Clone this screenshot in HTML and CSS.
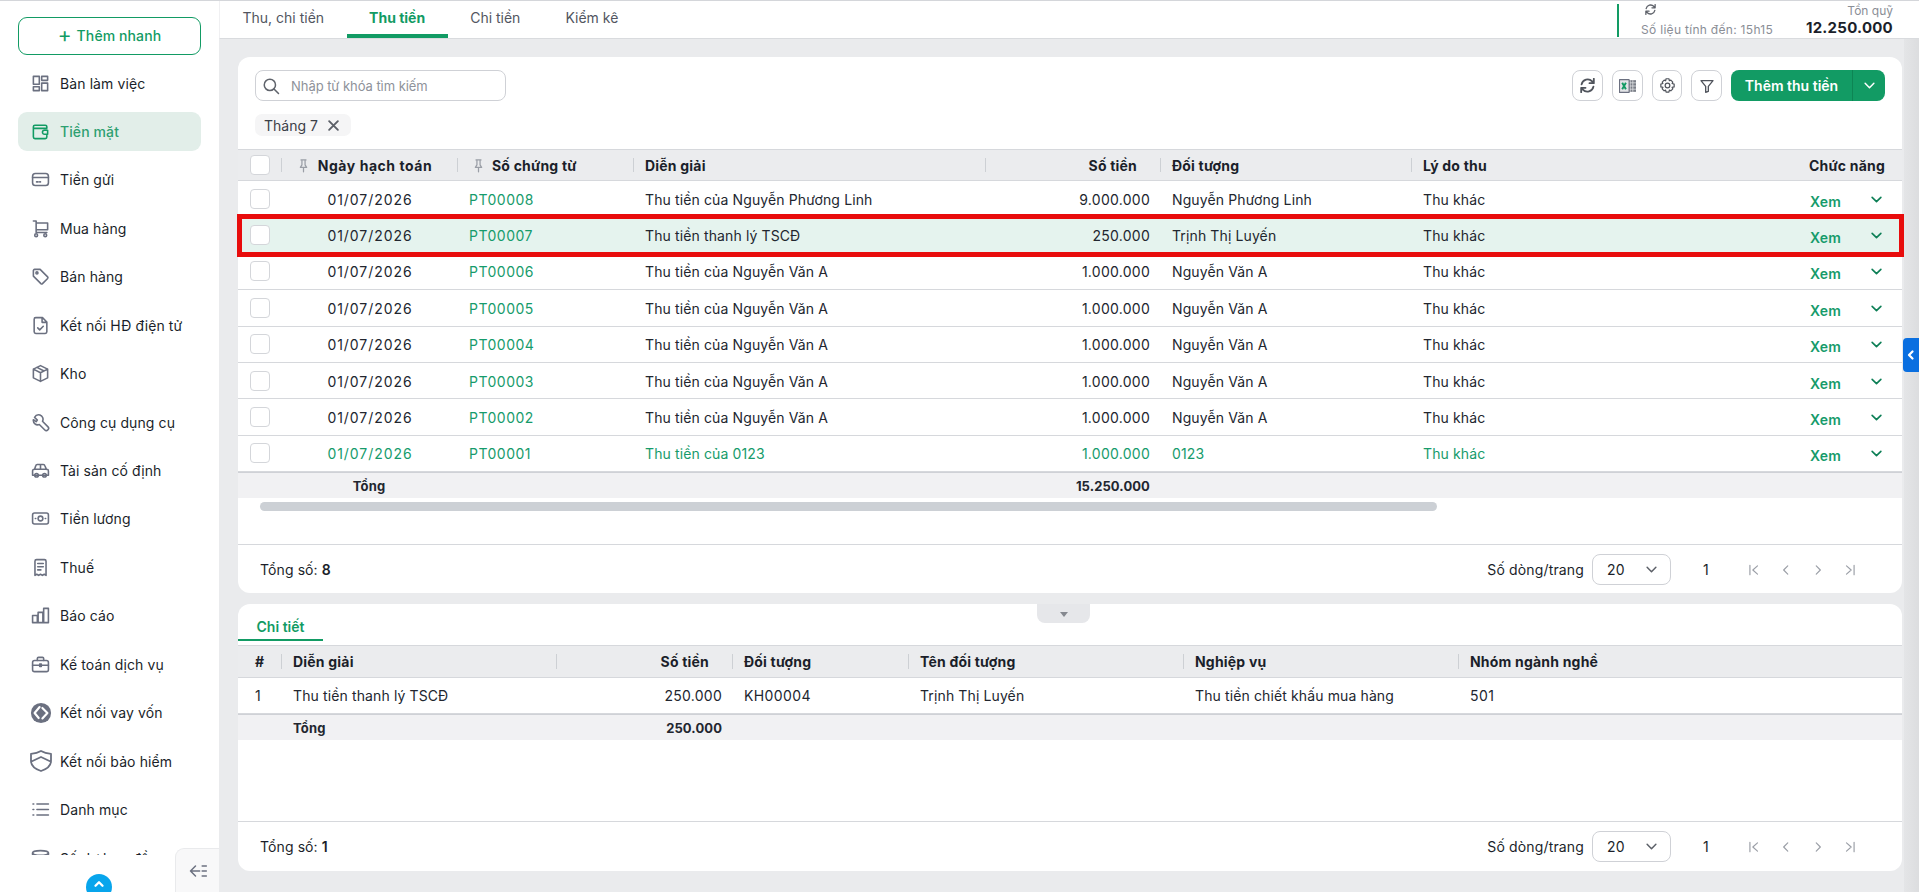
FILE: index.html
```html
<!DOCTYPE html>
<html lang="vi">

<head>
    <meta charset="UTF-8" />
    <meta name="viewport" content="width=device-width, initial-scale=1.0" />
    <title>Thu tiền</title>
    <link rel="stylesheet" href="styles.css">
</head>

<body>
    <svg class="sprite" width="0" height="0">
        <symbol id="i-down" viewBox="0 0 24 24"><path d="M5 8.500l7 7 7-7" /></symbol>
        <symbol id="i-pin" viewBox="0 0 24 24"><path d="M8 3h8M9.500 3v8L7 15h10l-2.500-4V3M12 15v7" /></symbol>
        <symbol id="i-sync" viewBox="3 2.500 18 19"><path d="M4.500 10.500a7.800 7.800 0 0 1 13.400-3.700L20 9M20 3.500V9h-5.500M19.500 13.500a7.800 7.800 0 0 1-13.400 3.700L4 15M4 20.500V15h5.500" /></symbol>
    </svg>

    <aside class="sidebar">
        <button class="quick-add"><span class="plus">+</span> Thêm nhanh</button>
        <nav class="menu">
            <a class="menu-item"><svg viewBox="0 0 24 24"><path d="M3 3h7.500v10H3zM13.500 3H21v5h-7.500zM13.500 11.500H21V21h-7.500zM3 16h7.500v5H3z" /></svg>Bàn làm việc</a>
            <a class="menu-item active"><svg viewBox="0 0 24 24"><path d="M20 8V6a2 2 0 0 0-2-2H5a2 2 0 0 0-2 2v13a2 2 0 0 0 2 2h13a2 2 0 0 0 2-2v-2M3 8h17M21 10.500h-4a2 2 0 0 0 0 5h4z" /></svg>Tiền mặt</a>
            <a class="menu-item"><svg viewBox="0 0 24 24"><rect x="2" y="4.500" width="20" height="15" rx="3.500" /><path d="M2 9.500h20M7 15h2M11 15h1" /></svg>Tiền gửi</a>
            <a class="menu-item"><svg viewBox="0 0 24 24"><path d="M3 2.500h3.500V17H20M6.500 5H21v8.500H6.500" /><circle cx="6.500" cy="20.500" r="1.800" /><circle cx="18" cy="20.500" r="1.800" /></svg>Mua hàng</a>
            <a class="menu-item"><svg viewBox="0 0 24 24"><path d="M3 4.500A1.500 1.500 0 0 1 4.500 3h7l9.500 9.500a1.500 1.500 0 0 1 0 2L14.500 21a1.500 1.500 0 0 1-2 0L3 11.500z" /><circle cx="7.500" cy="7.500" r="1.300" /></svg>Bán hàng</a>
            <a class="menu-item"><svg viewBox="0 0 24 24"><path d="M14.500 2H6a2 2 0 0 0-2 2v16a2 2 0 0 0 2 2h12a2 2 0 0 0 2-2V7.500zM14 2.500V8h5.500M8.500 15l2.500 2.500 4.500-4.500" /></svg>Kết nối HĐ điện tử</a>
            <a class="menu-item"><svg viewBox="0 0 24 24"><path d="M12 2l9 4.500v11L12 22l-9-4.500v-11zM3 6.500L12 11l9-4.500M12 11v11M7.500 4.300l9 4.500" /></svg>Kho</a>
            <a class="menu-item"><svg viewBox="0 0 24 24"><path d="M10.500 2.500a6 6 0 0 0-7 3L7 9l-1.500 2-3.500-2.500a5.500 5.500 0 0 0 7.500 6l7 7a2.500 2.500 0 0 0 4-.5 2.500 2.500 0 0 0 0-3.500l-7-7a5.500 5.500 0 0 0-3.500-8z" transform="translate(1 0)" /></svg>Công cụ dụng cụ</a>
            <a class="menu-item"><svg viewBox="0 0 24 24"><path d="M2 12.500a2 2 0 0 1 2-2h16a2 2 0 0 1 2 2V18H2zM4.500 10.500L6 6a2 2 0 0 1 2-1.500h7.500A2 2 0 0 1 17.500 6l2 4.500M12 4.500v6" /><circle cx="7" cy="18" r="2.300" /><circle cx="17" cy="18" r="2.300" /></svg>Tài sản cố định</a>
            <a class="menu-item"><svg viewBox="0 0 24 24"><rect x="2" y="5" width="20" height="14" rx="2.500" /><circle cx="12" cy="12" r="3" /><path d="M5.500 12h.5M18 12h.5" /></svg>Tiền lương</a>
            <a class="menu-item"><svg viewBox="0 0 24 24"><path d="M5 22V4a2 2 0 0 1 2-2h10a2 2 0 0 1 2 2v18l-2.300-1.500-2.300 1.500-2.400-1.500-2.400 1.500-2.300-1.500zM8.500 7h7M8.500 11h7M8.500 15h4" /></svg>Thuế</a>
            <a class="menu-item"><svg viewBox="0 0 24 24"><path d="M2 12h6v9H2zM9 8h6v13H9zM16 3h6v18h-6z" /></svg>Báo cáo</a>
            <a class="menu-item"><svg viewBox="0 0 24 24"><rect x="2" y="7" width="20" height="14" rx="2.500" /><path d="M8 7V4.500A1.500 1.500 0 0 1 9.500 3h5A1.500 1.500 0 0 1 16 4.500V7M2 13h20M11 11.500h2v3h-2z" /></svg>Kế toán dịch vụ</a>
            <a class="menu-item"><svg class="big" viewBox="0 0 24 24"><circle class="solid" cx="12" cy="12" r="11" /><path class="cut" d="M10.500 5.500L5 12l4.500 5.500M13.500 6.500L19 12l-5.500 6" /></svg>Kết nối vay vốn</a>
            <a class="menu-item"><svg class="big" viewBox="1 1 22 22"><path d="M12 2c3 1.800 6 2.500 10 2.800V12c0 4.500-4 8-10 10-6-2-10-5.500-10-10V4.800C6 4.500 9 3.800 12 2zM2.500 12.500L12 8l9.500 4.500" /></svg>Kết nối bảo hiểm</a>
            <a class="menu-item"><svg viewBox="0 0 24 24"><path d="M7.500 5H22M7.500 12H22M7.500 19H22M2.500 5h1M2.500 12h1M2.500 19h1" /></svg>Danh mục</a>
            <a class="menu-item"><svg viewBox="0 0 24 24"><ellipse cx="12" cy="5" rx="10" ry="3" /><path d="M2 5v14c0 1.700 4.500 3 10 3s10-1.300 10-3V5" /></svg>Số dư ban đầu</a>
        </nav>
        <div class="menu-up"><svg viewBox="0 0 24 24"><path d="M6 15l6-6 6 6" /></svg></div>
        <div class="collapse"><svg viewBox="0 0 24 24"><path d="M9 6l-6 6 6 6M3 12h11M17 6h5M17 12h5M17 18h5" /></svg></div>
    </aside>

    <div class="main">
        <header class="topbar">
            <a class="top-tab">Thu, chi tiền</a>
            <a class="top-tab active">Thu tiền</a>
            <a class="top-tab">Chi tiền</a>
            <a class="top-tab">Kiểm kê</a>
            <div class="fund">
                <div class="fund-time">
                    <svg class="fund-sync"><use href="#i-sync" /></svg>
                    <span>Số liệu tính đến: 15h15</span>
                </div>
                <div class="fund-total">
                    <span>Tồn quỹ</span>
                    <b>12.250.000</b>
                </div>
            </div>
        </header>

        <div class="content">
            <section class="card card-list">
                <div class="toolbar">
                    <div class="filters">
                        <div class="search">
                            <svg viewBox="0 0 24 24"><circle cx="10.500" cy="10.500" r="7.500" /><path d="M16 16l6 6" /></svg>
                            <span>Nhập từ khóa tìm kiếm</span>
                        </div>
                        <div class="chip">Tháng 7
                            <svg viewBox="0 0 24 24"><path d="M5 5l14 14M19 5L5 19" /></svg>
                        </div>
                    </div>
                    <div class="tools">
                        <button class="tool"><svg class="tool-sync"><use href="#i-sync" /></svg></button>
                        <button class="tool">
                            <svg viewBox="0 0 16 13" class="excel">
                                <rect class="excel-sheet" x="8" y="1" width="8" height="11" />
                                <path class="excel-grid" d="M10.500 1v11M13 1v11M9 3.500h7M9 6.500h7M9 9.500h7" />
                                <rect class="excel-box" x="0.500" y="0.500" width="9" height="12" />
                                <path class="excel-x" d="M3 3.500l3.500 6M6.500 3.500L3 9.500" />
                            </svg>
                        </button>
                        <button class="tool tool-gear">
                            <svg viewBox="0 0 24 24"><path d="M10 2.500h4l.7 2.800 2-.9 2.800 2.800-1 2 2.900.8v4l-2.900.7 1 2-2.800 2.800-2-1-.7 2.900h-4l-.7-2.900-2 1-2.800-2.800 1-2-2.900-.7v-4l2.900-.8-1-2 2.800-2.800 2 .9z" /><circle cx="12" cy="12" r="3.300" /></svg>
                        </button>
                        <button class="tool">
                            <svg viewBox="0 0 24 24"><path d="M3 4h18l-7 8.500V20l-4 1.500v-9z" /></svg>
                        </button>
                        <div class="add-btn">
                            <span class="add-label">Thêm thu tiền</span>
                            <span class="add-more"><svg><use href="#i-down" /></svg></span>
                        </div>
                    </div>
                </div>

                <table class="grid grid-main">
                    <colgroup>
                        <col class="c-check"><col class="c-date"><col class="c-no"><col class="c-desc"><col class="c-amount"><col class="c-obj"><col class="c-reason"><col class="c-act">
                    </colgroup>
                    <thead>
                        <tr>
                            <th><span class="check"></span></th>
                            <th class="center head-date"><svg class="pin"><use href="#i-pin" /></svg>Ngày hạch toán</th>
                            <th><svg class="pin pin-no"><use href="#i-pin" /></svg>Số chứng từ</th>
                            <th>Diễn giải</th>
                            <th class="right head-amount">Số tiền</th>
                            <th>Đối tượng</th>
                            <th>Lý do thu</th>
                            <th class="right no-sep">Chức năng</th>
                        </tr>
                    </thead>
                    <tbody>
                        <tr>
                            <td><span class="check"></span></td><td class="center date">01/07/2026</td><td class="link">PT00008</td><td>Thu tiền của Nguyễn Phương Linh</td><td class="right">9.000.000</td><td>Nguyễn Phương Linh</td><td>Thu khác</td>
                            <td class="act"><span>Xem</span><svg><use href="#i-down" /></svg></td>
                        </tr>
                        <tr class="selected">
                            <td><span class="check"></span></td><td class="center date">01/07/2026</td><td class="link">PT00007</td><td>Thu tiền thanh lý TSCĐ</td><td class="right">250.000</td><td>Trịnh Thị Luyến</td><td>Thu khác</td>
                            <td class="act"><span>Xem</span><svg><use href="#i-down" /></svg></td>
                        </tr>
                        <tr>
                            <td><span class="check"></span></td><td class="center date">01/07/2026</td><td class="link">PT00006</td><td>Thu tiền của Nguyễn Văn A</td><td class="right">1.000.000</td><td>Nguyễn Văn A</td><td>Thu khác</td>
                            <td class="act"><span>Xem</span><svg><use href="#i-down" /></svg></td>
                        </tr>
                        <tr>
                            <td><span class="check"></span></td><td class="center date">01/07/2026</td><td class="link">PT00005</td><td>Thu tiền của Nguyễn Văn A</td><td class="right">1.000.000</td><td>Nguyễn Văn A</td><td>Thu khác</td>
                            <td class="act"><span>Xem</span><svg><use href="#i-down" /></svg></td>
                        </tr>
                        <tr>
                            <td><span class="check"></span></td><td class="center date">01/07/2026</td><td class="link">PT00004</td><td>Thu tiền của Nguyễn Văn A</td><td class="right">1.000.000</td><td>Nguyễn Văn A</td><td>Thu khác</td>
                            <td class="act"><span>Xem</span><svg><use href="#i-down" /></svg></td>
                        </tr>
                        <tr>
                            <td><span class="check"></span></td><td class="center date">01/07/2026</td><td class="link">PT00003</td><td>Thu tiền của Nguyễn Văn A</td><td class="right">1.000.000</td><td>Nguyễn Văn A</td><td>Thu khác</td>
                            <td class="act"><span>Xem</span><svg><use href="#i-down" /></svg></td>
                        </tr>
                        <tr>
                            <td><span class="check"></span></td><td class="center date">01/07/2026</td><td class="link">PT00002</td><td>Thu tiền của Nguyễn Văn A</td><td class="right">1.000.000</td><td>Nguyễn Văn A</td><td>Thu khác</td>
                            <td class="act"><span>Xem</span><svg><use href="#i-down" /></svg></td>
                        </tr>
                        <tr class="green-row">
                            <td><span class="check"></span></td><td class="center date">01/07/2026</td><td class="link">PT00001</td><td>Thu tiền của 0123</td><td class="right">1.000.000</td><td>0123</td><td>Thu khác</td>
                            <td class="act"><span>Xem</span><svg><use href="#i-down" /></svg></td>
                        </tr>
                    </tbody>
                    <tfoot>
                        <tr>
                            <td></td><td class="center">Tổng</td><td></td><td></td><td class="right">15.250.000</td><td></td><td></td><td></td>
                        </tr>
                    </tfoot>
                </table>
                <div class="hscroll"><div class="hscroll-thumb"></div></div>
                <div class="pager">
                    <div class="pager-total">Tổng số: <b>8</b></div>
                    <div class="pager-size">Số dòng/trang
                        <span class="size-select">20<svg><use href="#i-down" /></svg></span>
                    </div>
                    <span class="page-no">1</span>
                    <div class="page-nav">
                        <svg viewBox="0 0 24 24"><path d="M5 4v16M18 5l-8 7 8 7" /></svg>
                        <svg viewBox="0 0 24 24"><path d="M15 5l-7 7 7 7" /></svg>
                        <svg viewBox="0 0 24 24"><path d="M9 5l7 7-7 7" /></svg>
                        <svg viewBox="0 0 24 24"><path d="M19 4v16M6 5l8 7-8 7" /></svg>
                    </div>
                </div>
            </section>

            <section class="card card-detail">
                <div class="drawer"></div>
                <div class="detail-tabs"><a class="detail-tab">Chi tiết</a></div>
                <table class="grid grid-detail">
                    <colgroup>
                        <col class="d-no"><col class="d-desc"><col class="d-amount"><col class="d-obj"><col class="d-name"><col class="d-op"><col class="d-group">
                    </colgroup>
                    <thead>
                        <tr>
                            <th>#</th>
                            <th>Diễn giải</th>
                            <th class="right head-amount">Số tiền</th>
                            <th>Đối tượng</th>
                            <th>Tên đối tượng</th>
                            <th>Nghiệp vụ</th>
                            <th>Nhóm ngành nghề</th>
                        </tr>
                    </thead>
                    <tbody>
                        <tr>
                            <td>1</td><td>Thu tiền thanh lý TSCĐ</td><td class="right">250.000</td><td class="code">KH00004</td><td>Trịnh Thị Luyến</td><td>Thu tiền chiết khấu mua hàng</td><td class="code">501</td>
                        </tr>
                    </tbody>
                    <tfoot>
                        <tr>
                            <td></td><td>Tổng</td><td class="right">250.000</td><td></td><td></td><td></td><td></td>
                        </tr>
                    </tfoot>
                </table>
                <div class="pager pager-bottom">
                    <div class="pager-total">Tổng số: <b>1</b></div>
                    <div class="pager-size">Số dòng/trang
                        <span class="size-select">20<svg><use href="#i-down" /></svg></span>
                    </div>
                    <span class="page-no">1</span>
                    <div class="page-nav">
                        <svg viewBox="0 0 24 24"><path d="M5 4v16M18 5l-8 7 8 7" /></svg>
                        <svg viewBox="0 0 24 24"><path d="M15 5l-7 7 7 7" /></svg>
                        <svg viewBox="0 0 24 24"><path d="M9 5l7 7-7 7" /></svg>
                        <svg viewBox="0 0 24 24"><path d="M19 4v16M6 5l8 7-8 7" /></svg>
                    </div>
                </div>
            </section>
        </div>

        <div class="side-strip"></div>
        <div class="side-toggle"><svg viewBox="0 0 24 24"><path d="M15 5l-7 7 7 7" /></svg></div>
    </div>

    <div class="mark"></div>
</body>

</html>
```
FILE: styles.css
```css
* {
    box-sizing: border-box;
}

html,
body {
    height: 892px;
    overflow: hidden;
}

body {
    margin: 0;
    display: flex;
    font-family: Inter, "Noto Sans", sans-serif;
    font-size: 14px;
    color: #1b1f2a;
    background: #fff;
    border-top: 1px solid #d4d6da;
    position: relative;
}

.sprite {
    position: absolute;
}

svg {
    fill: none;
    stroke: currentColor;
    stroke-width: 2;
    stroke-linecap: round;
    stroke-linejoin: round;
}

/* sidebar */
.sidebar {
    width: 219px;
    flex-shrink: 0;
    padding: 16px 18px 0;
    position: relative;
    background: #fff;
}

.quick-add {
    width: 183px;
    height: 38px;
    display: block;
    padding: 0 0 2px;
    border: 1px solid #129b64;
    border-radius: 9px;
    background: #fff;
    color: #129b64;
    font: 500 14px Inter, sans-serif;
    letter-spacing: 0.1px;
}

.quick-add .plus {
    font-size: 21px;
    font-weight: 400;
    line-height: 14px;
    vertical-align: -1px;
    margin-right: 1px;
}

.menu {
    height: 791px;
    margin: 9px -18px 0;
    padding: 0 18px;
    overflow: hidden;
}

.menu-item {
    height: 39px;
    margin-bottom: 9.450px;
    padding: 0 0 1px 13px;
    display: flex;
    align-items: center;
    gap: 10px;
    border-radius: 9px;
    white-space: nowrap;
    letter-spacing: 0.1px;
}

.menu-item svg {
    width: 19px;
    height: 19px;
    flex-shrink: 0;
    color: #6b7080;
    stroke-width: 2;
}

.menu-item svg.big {
    width: 22px;
    height: 22px;
    margin: 0 -1.500px;
    stroke-width: 1.800;
}

.menu-item .solid {
    fill: #6b7080;
    stroke: none;
}

.menu-item .cut {
    stroke: #fff;
    stroke-width: 2.300;
}

.menu-item.active {
    background: #e2eee9;
    color: #2ea071;
    font-weight: 500;
}

.menu-item.active svg {
    color: #129b64;
}

.menu-up {
    position: absolute;
    left: 86px;
    top: 873px;
    width: 26px;
    height: 26px;
    border-radius: 50%;
    background: #08a5ec;
    color: #fff;
    display: flex;
    justify-content: center;
    padding-top: 3px;
}

.menu-up svg {
    width: 14px;
    height: 14px;
    stroke-width: 4;
}

.collapse {
    position: absolute;
    right: 0;
    top: 847px;
    width: 44px;
    height: 44px;
    background: #f8f8f9;
    border: 1px solid #e9eaec;
    border-right: none;
    border-bottom: none;
    border-top-left-radius: 9px;
    color: #6b7080;
    padding: 12px 0 0 12px;
}

.collapse svg {
    display: block;
    width: 20px;
    height: 20px;
    stroke-width: 1.800;
}

/* main column */
.main {
    flex: 1;
    min-width: 0;
    display: flex;
    flex-direction: column;
    background: #eaebed;
    position: relative;
}

.topbar {
    height: 38px;
    flex-shrink: 0;
    display: flex;
    background: #fff;
    border-bottom: 1px solid #d9dbde;
    border-left: 1px solid #f0f0f2;
}

.top-tab {
    height: 37px;
    padding: 8px 22.500px 0;
    color: #52565f;
}

.top-tab.active {
    color: #129b64;
    font-weight: 700;
    border-bottom: 4px solid #129b64;
}

.fund {
    margin-left: auto;
    margin-right: 26px;
    margin-top: 3px;
    height: 33px;
    display: flex;
    border-left: 2px solid #129b64;
    padding-left: 22px;
    width: 276px;
    justify-content: space-between;
}

.fund-time {
    font-size: 12px;
    color: #8a8e96;
    display: flex;
    flex-direction: column;
    letter-spacing: 0.3px;
}

.fund-sync {
    width: 15px;
    height: 15px;
    margin: 0 0 7px 2px;
    color: #5c6068;
    stroke-width: 2.200;
}

.fund-total {
    display: flex;
    flex-direction: column;
    align-items: flex-end;
    font-size: 12px;
    color: #8a8e96;
}

.fund-total span {
    line-height: 14px;
}

.fund-total b {
    font-size: 15px;
    color: #1b1f2a;
    letter-spacing: 0.250px;
    line-height: 20px;
}

.content {
    flex: 1;
    display: flex;
    flex-direction: column;
    gap: 11px;
    padding: 18px 0 0 19px;
    width: 1683px;
}

.card {
    background: #fff;
    border-radius: 12px;
    position: relative;
}

.card-list {
    height: 536px;
}

.card-detail {
    height: 267px;
}

/* toolbar */
.toolbar {
    height: 92px;
    padding: 13px 17px 0;
    display: flex;
    justify-content: space-between;
}

.search {
    width: 251px;
    height: 31px;
    border: 1px solid #cfd1d6;
    border-radius: 8px;
    display: flex;
    align-items: center;
    padding-left: 6px;
    gap: 11px;
    color: #8e929a;
    font-size: 13px;
    letter-spacing: -0.05px;
}

.search svg {
    width: 18px;
    height: 18px;
    color: #5f636b;
}

.chip {
    margin-top: 13px;
    width: 96px;
    height: 22px;
    border-radius: 7px;
    background: #f5f5f6;
    display: flex;
    align-items: center;
    justify-content: space-between;
    padding: 0 10px 0 9px;
    color: #3c4048;
}

.chip svg {
    width: 15px;
    height: 15px;
    color: #5c6068;
    stroke-width: 3;
}

.tools {
    display: flex;
    gap: 9px;
}

.tool {
    width: 31px;
    height: 31px;
    border: 1px solid #cfd1d6;
    border-radius: 8px;
    background: #fff;
    padding: 0;
    display: flex;
    align-items: center;
    justify-content: center;
    color: #50545c;
}

.tool svg {
    width: 16px;
    height: 16px;
}

.tool .tool-sync {
    width: 15px;
    height: 15px;
    stroke-width: 2.300;
}

.tool .excel {
    width: 17px;
    height: 14px;
    stroke: none;
}

.excel-sheet {
    fill: #7b7f88;
}

.excel-grid {
    stroke: #e6e7ea;
    stroke-width: 0.700;
    stroke-linecap: butt;
}

.excel-box {
    fill: #e3e4e7;
    stroke: #6b7080;
    stroke-width: 1;
}

.excel-x {
    stroke: #129b64;
    stroke-width: 1.800;
    stroke-linecap: butt;
}

.tool-gear {
    width: 30px;
}

.tool-gear svg {
    width: 17px;
    height: 17px;
    stroke-width: 1.700;
}

.add-btn {
    width: 154px;
    height: 31px;
    display: flex;
    border-radius: 8px;
    background: #129b64;
    color: #fff;
    font-weight: 600;
}

.add-label {
    flex: 1;
    text-align: center;
    line-height: 31px;
    border-right: 1px solid #0d8554;
}

.add-more {
    width: 32px;
    display: flex;
    align-items: center;
    justify-content: center;
}

.add-more svg {
    width: 15px;
    height: 15px;
    stroke-width: 2.400;
}

/* tables */
.grid {
    width: 100%;
    table-layout: fixed;
    border-collapse: separate;
    border-spacing: 0;
}

.c-check { width: 43px; }
.c-date { width: 176px; }
.c-no { width: 176px; }
.c-desc { width: 352px; }
.c-amount { width: 175px; }
.c-obj { width: 251px; }
.c-reason { width: 201px; }
.c-act { width: 290px; }

.d-no { width: 43px; }
.d-desc { width: 275px; }
.d-amount { width: 176px; }
.d-obj { width: 176px; }
.d-name { width: 275px; }
.d-op { width: 275px; }
.d-group { width: 444px; }

.grid th {
    height: 32px;
    padding: 0 12px;
    background: #ebecee;
    border-top: 1px solid #d6d8dc;
    border-bottom: 1px solid #d6d8dc;
    font-weight: 700;
    font-size: 14px;
    letter-spacing: 0.2px;
    text-align: left;
    white-space: nowrap;
    position: relative;
}

.grid th:not(:first-child)::before {
    content: "";
    position: absolute;
    left: 0;
    top: 8px;
    bottom: 8px;
    width: 1px;
    background: #cdd0d4;
}

.grid td {
    height: 36.400px;
    padding: 0 12px;
    border-bottom: 1px solid #d6d8dc;
    white-space: nowrap;
    color: #22262f;
    letter-spacing: 0.12px;
}

.grid-main tbody td {
    padding-top: 1px;
}

.grid th.center,
.grid td.center {
    text-align: center;
}

.grid th.right,
.grid td.right {
    text-align: right;
}

.grid th.head-date {
    padding-right: 22px;
    letter-spacing: 0.55px;
}

.grid th.head-amount {
    padding-right: 23px;
}

.grid td.right {
    padding-right: 10px;
    letter-spacing: 0.27px;
}

.grid td.date {
    padding-left: 14px;
    letter-spacing: 0.95px;
}

.grid td.code {
    letter-spacing: 0.4px;
}

.grid th.no-sep {
    padding-right: 17px;
}

.grid th.no-sep::before {
    display: none;
}

.grid td.link {
    color: #169b6b;
    letter-spacing: 0.5px;
}

.selected td {
    background: #e5f3ee;
}

.grid .green-row td {
    color: #169b6b;
}

.check {
    width: 20px;
    height: 20px;
    display: block;
    margin-left: -0.500px;
    border: 1px solid #d4d6da;
    border-radius: 4px;
    background: #fff;
}

.grid-main tbody .check {
    margin-top: -1px;
}

.pin {
    width: 15px;
    height: 15px;
    margin-right: 7px;
    vertical-align: -2px;
    color: #9a9ea6;
    stroke-width: 2;
}

.pin-no {
    margin-left: 2px;
    margin-right: 6px;
}

.grid td.act {
    text-align: right;
    padding-right: 18px;
}

.act span {
    font-weight: 600;
    color: #169b6b;
    position: relative;
    top: 2px;
}

.act svg {
    width: 15px;
    height: 15px;
    margin-left: 28px;
    color: #0d7f56;
    stroke-width: 2.600;
    vertical-align: -2px;
}

.grid tfoot td {
    height: 26px;
    padding-top: 0;
    background: #f1f1f3;
    border-top: 1px solid #cfd1d6;
    border-bottom: none;
    font-size: 13px;
    font-weight: 700;
    letter-spacing: 0.2px;
}

.grid tfoot td.right {
    letter-spacing: 0.1px;
}

.hscroll {
    height: 47px;
    padding: 4px 0 0 22px;
    border-bottom: 1px solid #d6d8dc;
}

.hscroll-thumb {
    width: 1177px;
    height: 9px;
    border-radius: 5px;
    background: #ccd0d5;
}

.pager {
    height: 49px;
    padding: 0 18px 0 22px;
    display: flex;
    align-items: center;
}

.pager-total {
    flex: 1;
    letter-spacing: 0.1px;
}

.pager-total b {
    font-weight: 600;
}

.pager-size {
    display: flex;
    align-items: center;
    gap: 8px;
    letter-spacing: 0.15px;
}

.size-select {
    width: 79px;
    height: 31px;
    padding: 0 11px 0 14px;
    border: 1px solid #cfd1d6;
    border-radius: 8px;
    display: flex;
    align-items: center;
    justify-content: space-between;
}

.size-select svg {
    width: 15px;
    height: 15px;
    color: #5c6068;
    stroke-width: 2.400;
}

.page-no {
    width: 76px;
    padding-left: 32px;
}

.page-nav {
    display: flex;
    gap: 18px;
    margin-right: 27px;
    color: #9a9ea6;
}

.page-nav svg {
    width: 14px;
    height: 14px;
    stroke-width: 2;
}

/* detail */
.drawer {
    position: absolute;
    left: 799px;
    top: 0;
    width: 53px;
    height: 19px;
    background: #e6e7ea;
    border-radius: 0 0 8px 8px;
}

.drawer::after {
    content: "";
    position: absolute;
    left: 23px;
    top: 8px;
    border: 4px solid transparent;
    border-top: 5px solid #85888f;
    border-bottom: none;
}

.detail-tabs {
    height: 41px;
    padding-top: 12px;
}

.detail-tab {
    display: block;
    width: 85px;
    height: 25px;
    padding-top: 2px;
    text-align: center;
    color: #129b64;
    font-weight: 600;
    border-bottom: 2px solid #129b64;
}

.grid-detail th {
    height: 33px;
}

.grid-detail td {
    height: 36px;
}

.grid-detail th:first-child,
.grid-detail td:first-child {
    padding-left: 17px;
}

.pager-bottom {
    position: absolute;
    left: 0;
    right: 0;
    bottom: 0;
    height: 50px;
    border-top: 1px solid #d6d8dc;
}

/* right edge */
.side-strip {
    position: absolute;
    right: 0;
    top: 38px;
    bottom: 0;
    width: 15px;
    background: linear-gradient(90deg, #e4e5e7, #dcdddf);
}

.side-toggle {
    position: absolute;
    right: 0;
    top: 337px;
    width: 16px;
    height: 34px;
    border-radius: 4px 0 0 4px;
    background: #0a6fe0;
    color: #fff;
    display: flex;
    align-items: center;
}

.side-toggle svg {
    width: 12px;
    height: 12px;
    margin-left: 2px;
    stroke-width: 4.500;
}

/* red frame drawn over the selected row */
.mark {
    position: absolute;
    left: 237px;
    top: 213px;
    width: 1667px;
    height: 43px;
    border: 5px solid #e80c0c;
    pointer-events: none;
}
```
